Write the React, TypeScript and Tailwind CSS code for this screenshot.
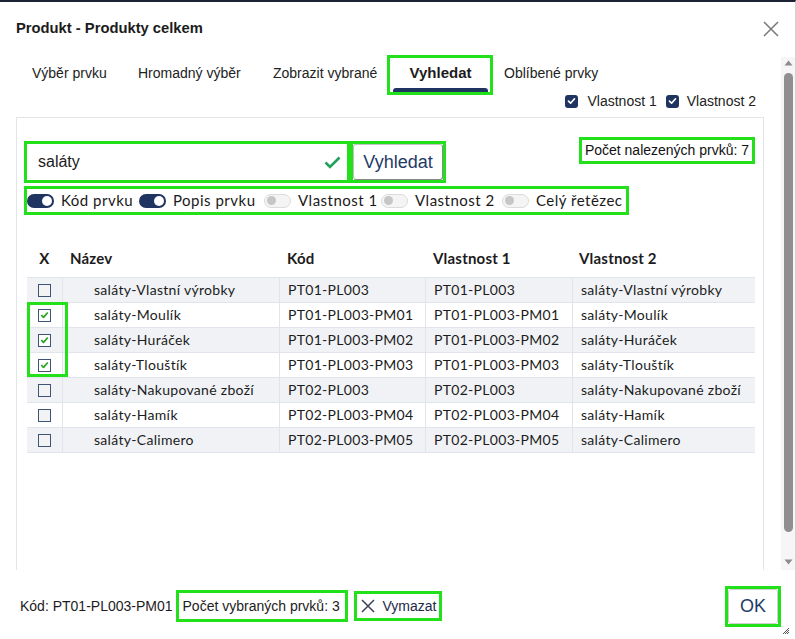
import React from "react";

const rows = [
  { name: "saláty-Vlastní výrobky", kod: "PT01-PL003", v1: "PT01-PL003", v2: "saláty-Vlastní výrobky", checked: false },
  { name: "saláty-Moulík", kod: "PT01-PL003-PM01", v1: "PT01-PL003-PM01", v2: "saláty-Moulík", checked: true },
  { name: "saláty-Huráček", kod: "PT01-PL003-PM02", v1: "PT01-PL003-PM02", v2: "saláty-Huráček", checked: true },
  { name: "saláty-Tlouštík", kod: "PT01-PL003-PM03", v1: "PT01-PL003-PM03", v2: "saláty-Tlouštík", checked: true },
  { name: "saláty-Nakupované zboží", kod: "PT02-PL003", v1: "PT02-PL003", v2: "saláty-Nakupované zboží", checked: false },
  { name: "saláty-Hamík", kod: "PT02-PL003-PM04", v1: "PT02-PL003-PM04", v2: "saláty-Hamík", checked: false },
  { name: "saláty-Calimero", kod: "PT02-PL003-PM05", v1: "PT02-PL003-PM05", v2: "saláty-Calimero", checked: false },
];

const filters = [
  { label: "Kód prvku", on: true, w: "w-[112px]" },
  { label: "Popis prvku", on: true, w: "w-[125px]" },
  { label: "Vlastnost 1", on: false, w: "w-[117px]" },
  { label: "Vlastnost 2", on: false, w: "w-[121px]" },
  { label: "Celý řetězec", on: false, w: "" },
];

const Toggle = ({ on }: { on: boolean }) =>
  on ? (
    <div className="w-[27px] h-[14px] rounded-full bg-[#1f3461] flex items-center justify-end pr-[2px] shrink-0">
      <div className="w-[10px] h-[10px] rounded-full bg-white" />
    </div>
  ) : (
    <div className="w-[27px] h-[14px] rounded-full bg-[#f4f4f4] border border-[#dcdcdc] flex items-center pl-[2px] shrink-0">
      <div className="w-[9px] h-[9px] rounded-full bg-[#c6c6c6]" />
    </div>
  );

const NavyCheck = () => (
  <div className="w-[13px] h-[13px] rounded-[3px] bg-[#1f3461] flex items-center justify-center shrink-0">
    <svg width="9" height="8" viewBox="0 0 9 8">
      <path d="M1.5 4.2 L3.6 6.2 L7.5 1.8" fill="none" stroke="white" strokeWidth="1.7" strokeLinecap="round" strokeLinejoin="round" />
    </svg>
  </div>
);

const RowCheck = ({ checked }: { checked: boolean }) => (
  <div
    className={
      "w-[13px] h-[13px] border border-[#3d5478] flex items-center justify-center " +
      (checked ? "bg-white" : "bg-[#f3f3f3]")
    }
  >
    {checked && (
      <svg width="9" height="8" viewBox="0 0 9 8">
        <path d="M1.3 4 L3.5 6.3 L7.8 1.5" fill="none" stroke="#2aa52a" strokeWidth="1.8" strokeLinejoin="round" />
      </svg>
    )}
  </div>
);

export default function App() {
  return (
    <div className="relative w-[796px] h-[639px] bg-white border-t-2 border-t-[#1a2233] border-r border-r-[#cfd2d6] flex flex-col overflow-hidden font-['Liberation_Sans',Arial,sans-serif] text-[#222]">
      {/* header */}
      <div className="h-[55px] flex items-start justify-between pl-4 pr-4 pt-[16px]">
        <div className="text-[14.75px] leading-5 font-bold text-[#1c1c1c]">Produkt - Produkty celkem</div>
        <svg className="mt-[3px]" width="16" height="16" viewBox="0 0 16 16">
          <path d="M1 1 L15 15 M15 1 L1 15" stroke="#777" strokeWidth="1.5" />
        </svg>
      </div>

      {/* body */}
      <div className="h-[513px] flex">
        <div className="flex-1 flex flex-col pl-4 pr-[17px]">
          {/* tabs */}
          <div className="h-[35px] flex text-[14px]">
            <div className="w-[106px] pl-4 pt-[6px] leading-5">Výběr prvku</div>
            <div className="w-[135px] pl-4 pt-[6px] leading-5">Hromadný výběr</div>
            <div className="w-[136px] pl-4 pt-[6px] leading-5">Zobrazit vybrané</div>
            <div className="relative w-[95px] flex flex-col justify-between">
              <div className="pt-[6px] leading-5 text-center font-bold text-[15px] text-[#1c1c1c]">Vyhledat</div>
              <div className="h-[4px] rounded-t-[3px] bg-[#1f3461]" />
              <div className="absolute -left-[6px] -right-[5px] -top-[2px] -bottom-[3px] border-[3px] border-[#22e11b]" />
            </div>
            <div className="pl-4 pt-[6px] leading-5">Oblíbené prvky</div>
          </div>

          {/* column options */}
          <div className="h-[25px] flex justify-end items-start pr-2 text-[14px] leading-[18px]">
            <div className="flex items-center gap-[9px]">
              <NavyCheck />
              <span>Vlastnost 1</span>
            </div>
            <div className="flex items-center gap-[8px] ml-[9px]">
              <NavyCheck />
              <span>Vlastnost 2</span>
            </div>
          </div>

          {/* panel */}
          <div className="flex-1 border-t border-l border-r border-[#e2e5ea] pl-[7px] pr-2 pt-[19px]">
            <div className="flex items-start">
              <div className="mt-[4px] w-[326px] h-[42px] border-[3px] border-[#22e11b] flex items-center justify-between pl-[11px] pr-[6px] bg-white">
                <span className="text-[16px] text-[#1c1c1c]">saláty</span>
                <svg width="17" height="13" viewBox="0 0 17 13">
                  <path d="M1.5 6.5 L6 11 L15.5 1.5" fill="none" stroke="#1fa25c" strokeWidth="2.6" />
                </svg>
              </div>
              <div className="mt-[4px] w-[96px] h-[42px] border-[3px] border-[#22e11b] flex">
                <div className="flex-1 border border-[#c4c4c4] border-r-[#888] border-b-[#888] rounded-[3px] flex items-center justify-center text-[18px] text-[#1f3a68]">
                  Vyhledat
                </div>
              </div>
              <div className="ml-auto w-[176px] h-[27px] border-[3px] border-[#22e11b] flex items-center justify-center text-[14px] text-[#111]">
                Počet nalezených prvků: 7
              </div>
            </div>

            <div className="mt-[3px] w-[605px] h-[29px] border-[3px] border-[#22e11b] flex items-center font-['Lato',sans-serif] text-[15px] tracking-[0.5px] text-[#1a1a1a]">
              {filters.map((f) => (
                <div key={f.label} className={"flex items-center gap-[7px] shrink-0 " + f.w}>
                  <Toggle on={f.on} />
                  <span>{f.label}</span>
                </div>
              ))}
            </div>

            {/* table */}
            <div className="relative mt-[25px] ml-[3px] w-[728px] font-['Lato',sans-serif] text-[14px] tracking-[0.3px] text-[#1c1c1c]">
              <div className="h-[37px] grid grid-cols-[35px_217px_146px_147px_183px] items-center font-bold text-[15px] tracking-[0.2px]">
                <div className="text-center">X</div>
                <div className="pl-2">Název</div>
                <div className="pl-2">Kód</div>
                <div className="pl-2">Vlastnost 1</div>
                <div className="pl-[7px]">Vlastnost 2</div>
              </div>
              <div className="border-t border-[#e1e4ea]">
                {rows.map((r, i) => (
                  <div
                    key={r.name}
                    className={
                      "h-[25px] grid grid-cols-[35px_217px_146px_147px_183px] border-b border-[#e1e4ea] " +
                      (i % 2 === 0 ? "bg-[#f0f2f6]" : "bg-white")
                    }
                  >
                    <div className="flex items-center justify-center">
                      <RowCheck checked={r.checked} />
                    </div>
                    <div className="border-l border-[#e1e4ea] pl-[31px] pb-[2px] flex items-center whitespace-nowrap">{r.name}</div>
                    <div className="border-l border-[#e1e4ea] pl-2 pb-[2px] flex items-center whitespace-nowrap">{r.kod}</div>
                    <div className="border-l border-[#e1e4ea] pl-2 pb-[2px] flex items-center whitespace-nowrap">{r.v1}</div>
                    <div className="border-l border-[#e1e4ea] pl-2 pb-[2px] flex items-center whitespace-nowrap">{r.v2}</div>
                  </div>
                ))}
              </div>
              <div className="absolute left-0 top-[62px] w-[41px] h-[75px] border-[3px] border-[#22e11b]" />
            </div>
          </div>
        </div>

        {/* scrollbar */}
        <div className="w-[15px] bg-[#f6f6f6] flex flex-col items-center">
          <svg className="mt-[3px]" width="9" height="6" viewBox="0 0 9 6">
            <path d="M4.5 0.5 L8.5 5.5 L0.5 5.5 Z" fill="#8c8c8c" />
          </svg>
          <div className="mt-[7px] w-[9px] h-[459px] rounded-full bg-[#8f8f8f]" />
          <svg className="mt-[27px]" width="9" height="6" viewBox="0 0 9 6">
            <path d="M0.5 0.5 L8.5 0.5 L4.5 5.5 Z" fill="#8c8c8c" />
          </svg>
        </div>
      </div>

      {/* footer */}
      <div className="flex-1 flex items-center pl-[20px] pr-[14px] pt-[3px] text-[14px]">
        <span className="text-[#1c1c1c]">Kód: PT01-PL003-PM01</span>
        <div className="ml-[3px] w-[172px] h-[32px] border-[3px] border-[#22e11b] flex items-center pl-[4px] text-[#1c1c1c]">
          Počet vybraných prvků: 3
        </div>
        <div className="ml-[6px] w-[88px] h-[30px] border-[3px] border-[#22e11b] flex items-center pl-[4px] gap-[8px] text-[#1e2a48]">
          <svg width="14" height="14" viewBox="0 0 14 14">
            <path d="M1 1 L13 13 M13 1 L1 13" stroke="#3a4356" strokeWidth="1.5" />
          </svg>
          <span>Vymazat</span>
        </div>
        <div className="ml-auto w-[56px] h-[41px] border-[3px] border-[#22e11b] flex">
          <div className="flex-1 border border-[#cfcfcf] rounded-[3px] bg-white flex items-center justify-center text-[18px] text-[#1f3a68]">
            OK
          </div>
        </div>
      </div>

      {/* resize grip */}
      <svg className="absolute right-[5px] bottom-[4px]" width="8" height="8" viewBox="0 0 8 8">
        <path d="M7 1 L1 7 M7 3 L3 7 M7 5 L5 7" stroke="#555" strokeWidth="1" />
      </svg>
    </div>
  );
}
